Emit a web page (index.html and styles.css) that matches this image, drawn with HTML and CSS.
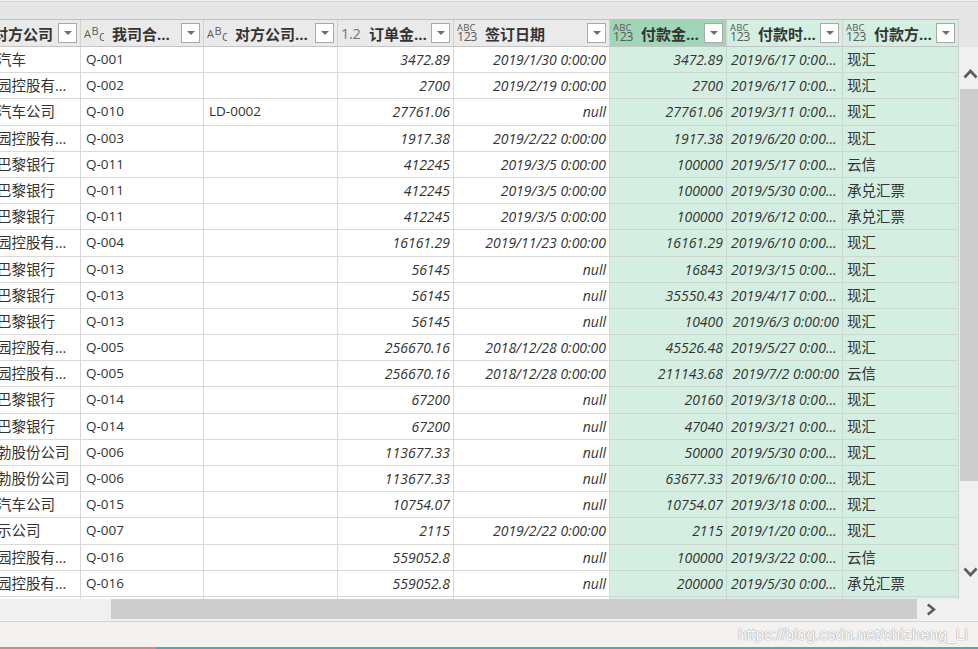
FILE: index.html
```html
<!DOCTYPE html>
<html lang="zh-CN">
<head>
<meta charset="utf-8">
<title>Power Query</title>
<link rel="stylesheet" href="styles.css">
</head>
<body>
<div class="top"></div>
<div class="mid">
  <div class="grid">
    <div class="hrow">
      <div class="hc first"><span class="ti abc"><i>A</i><i class="sup">B</i><i class="sub">C</i></span><span class="hl">对方公司</span><span class="dd"></span></div>
      <div class="hc"><span class="ti abc"><i>A</i><i class="sup">B</i><i class="sub">C</i></span><span class="hl">我司合同号</span><span class="dd"></span></div>
      <div class="hc"><span class="ti abc"><i>A</i><i class="sup">B</i><i class="sub">C</i></span><span class="hl">对方公司合同号</span><span class="dd"></span></div>
      <div class="hc"><span class="ti num">1.2</span><span class="hl">订单金额</span><span class="dd"></span></div>
      <div class="hc"><span class="ti any"><b>ABC</b><b class="d">123</b></span><span class="hl">签订日期</span><span class="dd"></span></div>
      <div class="hc sel"><span class="ti any"><b>ABC</b><b class="d">123</b></span><span class="hl">付款金额</span><span class="dd"></span></div>
      <div class="hc gh"><span class="ti any"><b>ABC</b><b class="d">123</b></span><span class="hl">付款时间</span><span class="dd"></span></div>
      <div class="hc gh"><span class="ti any"><b>ABC</b><b class="d">123</b></span><span class="hl">付款方式</span><span class="dd"></span></div>
    </div>
    <div class="body">
      <div class="row"><div class="c c1">上海汽车</div><div class="c">Q-001</div><div class="c"></div><div class="c n">3472.89</div><div class="c n">2019/1/30 0:00:00</div><div class="c g n">3472.89</div><div class="c g n t">2019/6/17 0:00:00</div><div class="c g cj">现汇</div></div>
      <div class="row"><div class="c c1">科技园控股有限公司</div><div class="c">Q-002</div><div class="c"></div><div class="c n">2700</div><div class="c n">2019/2/19 0:00:00</div><div class="c g n">2700</div><div class="c g n t">2019/6/17 0:00:00</div><div class="c g cj">现汇</div></div>
      <div class="row"><div class="c c1">北京汽车公司</div><div class="c">Q-010</div><div class="c">LD-0002</div><div class="c n">27761.06</div><div class="c n">null</div><div class="c g n">27761.06</div><div class="c g n t">2019/3/11 0:00:00</div><div class="c g cj">现汇</div></div>
      <div class="row"><div class="c c1">科技园控股有限公司</div><div class="c">Q-003</div><div class="c"></div><div class="c n">1917.38</div><div class="c n">2019/2/22 0:00:00</div><div class="c g n">1917.38</div><div class="c g n t">2019/6/20 0:00:00</div><div class="c g cj">现汇</div></div>
      <div class="row"><div class="c c1">法国巴黎银行</div><div class="c">Q-011</div><div class="c"></div><div class="c n">412245</div><div class="c n">2019/3/5 0:00:00</div><div class="c g n">100000</div><div class="c g n t">2019/5/17 0:00:00</div><div class="c g cj">云信</div></div>
      <div class="row"><div class="c c1">法国巴黎银行</div><div class="c">Q-011</div><div class="c"></div><div class="c n">412245</div><div class="c n">2019/3/5 0:00:00</div><div class="c g n">100000</div><div class="c g n t">2019/5/30 0:00:00</div><div class="c g cj">承兑汇票</div></div>
      <div class="row"><div class="c c1">法国巴黎银行</div><div class="c">Q-011</div><div class="c"></div><div class="c n">412245</div><div class="c n">2019/3/5 0:00:00</div><div class="c g n">100000</div><div class="c g n t">2019/6/12 0:00:00</div><div class="c g cj">承兑汇票</div></div>
      <div class="row"><div class="c c1">科技园控股有限公司</div><div class="c">Q-004</div><div class="c"></div><div class="c n">16161.29</div><div class="c n">2019/11/23 0:00:00</div><div class="c g n">16161.29</div><div class="c g n t">2019/6/10 0:00:00</div><div class="c g cj">现汇</div></div>
      <div class="row"><div class="c c1">法国巴黎银行</div><div class="c">Q-013</div><div class="c"></div><div class="c n">56145</div><div class="c n">null</div><div class="c g n">16843</div><div class="c g n t">2019/3/15 0:00:00</div><div class="c g cj">现汇</div></div>
      <div class="row"><div class="c c1">法国巴黎银行</div><div class="c">Q-013</div><div class="c"></div><div class="c n">56145</div><div class="c n">null</div><div class="c g n">35550.43</div><div class="c g n t">2019/4/17 0:00:00</div><div class="c g cj">现汇</div></div>
      <div class="row"><div class="c c1">法国巴黎银行</div><div class="c">Q-013</div><div class="c"></div><div class="c n">56145</div><div class="c n">null</div><div class="c g n">10400</div><div class="c g n t">2019/6/3 0:00:00</div><div class="c g cj">现汇</div></div>
      <div class="row"><div class="c c1">科技园控股有限公司</div><div class="c">Q-005</div><div class="c"></div><div class="c n">256670.16</div><div class="c n">2018/12/28 0:00:00</div><div class="c g n">45526.48</div><div class="c g n t">2019/5/27 0:00:00</div><div class="c g cj">现汇</div></div>
      <div class="row"><div class="c c1">科技园控股有限公司</div><div class="c">Q-005</div><div class="c"></div><div class="c n">256670.16</div><div class="c n">2018/12/28 0:00:00</div><div class="c g n">211143.68</div><div class="c g n t">2019/7/2 0:00:00</div><div class="c g cj">云信</div></div>
      <div class="row"><div class="c c1">法国巴黎银行</div><div class="c">Q-014</div><div class="c"></div><div class="c n">67200</div><div class="c n">null</div><div class="c g n">20160</div><div class="c g n t">2019/3/18 0:00:00</div><div class="c g cj">现汇</div></div>
      <div class="row"><div class="c c1">法国巴黎银行</div><div class="c">Q-014</div><div class="c"></div><div class="c n">67200</div><div class="c n">null</div><div class="c g n">47040</div><div class="c g n t">2019/3/21 0:00:00</div><div class="c g cj">现汇</div></div>
      <div class="row"><div class="c c1">中蓬勃股份公司</div><div class="c">Q-006</div><div class="c"></div><div class="c n">113677.33</div><div class="c n">null</div><div class="c g n">50000</div><div class="c g n t">2019/5/30 0:00:00</div><div class="c g cj">现汇</div></div>
      <div class="row"><div class="c c1">中蓬勃股份公司</div><div class="c">Q-006</div><div class="c"></div><div class="c n">113677.33</div><div class="c n">null</div><div class="c g n">63677.33</div><div class="c g n t">2019/6/10 0:00:00</div><div class="c g cj">现汇</div></div>
      <div class="row"><div class="c c1">北京汽车公司</div><div class="c">Q-015</div><div class="c"></div><div class="c n">10754.07</div><div class="c n">null</div><div class="c g n">10754.07</div><div class="c g n t">2019/3/18 0:00:00</div><div class="c g cj">现汇</div></div>
      <div class="row"><div class="c c1">快乐示公司</div><div class="c">Q-007</div><div class="c"></div><div class="c n">2115</div><div class="c n">2019/2/22 0:00:00</div><div class="c g n">2115</div><div class="c g n t">2019/1/20 0:00:00</div><div class="c g cj">现汇</div></div>
      <div class="row"><div class="c c1">科技园控股有限公司</div><div class="c">Q-016</div><div class="c"></div><div class="c n">559052.8</div><div class="c n">null</div><div class="c g n">100000</div><div class="c g n t">2019/3/22 0:00:00</div><div class="c g cj">云信</div></div>
      <div class="row"><div class="c c1">科技园控股有限公司</div><div class="c">Q-016</div><div class="c"></div><div class="c n">559052.8</div><div class="c n">null</div><div class="c g n">200000</div><div class="c g n t">2019/5/30 0:00:00</div><div class="c g cj">承兑汇票</div></div>
      <div class="row"><div class="c c1">科技园控股有限公司</div><div class="c">Q-017</div><div class="c"></div><div class="c n">38000</div><div class="c n">null</div><div class="c g n">38000</div><div class="c g n t">2019/6/5 0:00:00</div><div class="c g cj">现汇</div></div>
    </div>
  </div>
  <div class="side">
    <div class="side-head"></div>
    <div class="vs">
      <div class="vs-up"><svg width="15" height="10" viewBox="0 0 15 10"><polyline points="1.5,8.5 7.5,2 13.5,8.5" fill="none" stroke="#5c5c5c" stroke-width="2.6"/></svg></div>
      <div class="vs-thumb"></div>
      <div class="vs-space"></div>
      <div class="vs-down"><svg width="15" height="10" viewBox="0 0 15 10"><polyline points="1.5,1.5 7.5,8 13.5,1.5" fill="none" stroke="#5c5c5c" stroke-width="2.6"/></svg></div>
    </div>
  </div>
</div>
<div class="hs">
  <div class="hs-thumb"></div>
  <div class="hs-right"><svg width="10" height="13" viewBox="0 0 10 13"><polyline points="1.8,1.5 8,6.5 1.8,11.5" fill="none" stroke="#5c5c5c" stroke-width="2.6"/></svg></div>
</div>
<div class="status"><span class="wm">https://blog.csdn.net/shizheng_Li</span></div>
<div class="strip"></div>
</body>
</html>
```
FILE: styles.css
```css
* { box-sizing: border-box; }
html, body { margin: 0; padding: 0; }
body {
  width: 978px;
  height: 649px;
  overflow: hidden;
  background: #f0f0f0;
  font-family: "Open Sans", "Noto Sans CJK SC", sans-serif;
  font-size: 13.5px;
  color: #333;
}
.top {
  height: 18px;
  margin-top: 1px;
  border-top: 1px solid #d6d6d6;
  background: #e6e6e6;
}
.mid { display: flex; height: 580px; }
.grid { width: 959px; overflow: hidden; flex: none; }
.side { width: 19px; flex: none; display: flex; flex-direction: column; }
.side-head { height: 28px; background: #e6e6e6; }
.vs { flex: 1; background: #f0f0f0; display: flex; flex-direction: column; }
.vs-up { height: 42px; display: flex; justify-content: center; align-items: flex-end; padding: 0 0 10px 3px; }
.vs-thumb { height: 392px; margin-left: 1px; background: #cdcdcd; }
.vs-space { flex: 1; }
.vs-down { height: 42px; display: flex; justify-content: center; align-items: flex-start; padding: 10px 0 0 3px; }

.hrow, .row {
  display: grid;
  grid-template-columns: 117px 123px 134px 116px 156px 117px 116px 116px;
  margin-left: -36px;
}
.hrow {
  height: 28px;
  border-top: 1px solid #c0c0c0;
  border-bottom: 1px solid #c4c4c4;
  background: #eaeaea;
}
.hc {
  display: flex;
  align-items: center;
  min-width: 0;
  padding-left: 3px;
  border-right: 1px solid #d2d2d2;
}
.hc.sel { background: #9fd6b7; }
.hc.gh { background: #d4efe1; }
.ti { width: 20px; flex: none; margin-right: 8px; color: #5a5a5a; overflow: hidden; }
.ti i { font-style: normal; }
.abc { font-size: 11px; display: flex; align-items: center; height: 20px; }
.abc .sup { position: relative; top: -3px; margin-left: 0.5px; }
.abc .sub { position: relative; top: 3px; margin-left: 0.5px; }
.num { font-size: 14.5px; color: #767676; letter-spacing: -0.3px; }
.any { display: flex; flex-direction: column; align-items: flex-start; line-height: 1; }
.any b { font-weight: 400; font-size: 9.5px; letter-spacing: 0.2px; }
.any b.d { font-size: 12.5px; letter-spacing: -0.5px; margin-top: -1px; }
.hl {
  flex: 1;
  min-width: 0;
  overflow: hidden;
  white-space: nowrap;
  text-overflow: ellipsis;
  font-weight: 700;
  font-size: 15px;
  color: #333;
}
.first .hl { margin-left: -2px; }
.first .dd { margin-left: 1px; }
.dd {
  width: 19px;
  height: 20px;
  flex: none;
  margin: 0 3px 0 4px;
  border: 1px solid #a9a9a9;
  background: #fff;
  display: flex;
  align-items: center;
  justify-content: center;
}
.dd::after {
  content: "";
  border-left: 4px solid transparent;
  border-right: 4px solid transparent;
  border-top: 4px solid #6e6e6e;
}

.body { height: 552px; overflow: hidden; background: #fff; }
.row { height: 26.2px; }
.c {
  min-width: 0;
  padding: 0 4px 0 5px;
  line-height: 25px;
  white-space: nowrap;
  overflow: hidden;
  text-overflow: ellipsis;
  background: #fff;
  border-right: 1px solid #d9d9d9;
  border-bottom: 1px solid #d9d9d9;
}
.c1 { padding-left: 4px; font-size: 14.5px; }
.cj { font-size: 14.5px; padding-left: 4px; }
.n { text-align: right; font-style: italic; font-size: 14px; padding: 0 3px 0 3px; }
.n.t { padding-left: 4px; letter-spacing: 0.06px; }
.g { background: #d4efe1; border-color: #cdd6d1; }

.hs { height: 22px; display: flex; background: #f0f0f0; }
.hs-thumb { margin-left: 111px; width: 806px; height: 20px; background: #cdcdcd; }
.hs-right { margin-left: 9px; padding-top: 3px; }
.status {
  height: 26px;
  border-top: 1px solid #d3d3d3;
  background: #f3f2f1;
  display: flex;
  justify-content: flex-end;
  align-items: center;
  padding-right: 10px;
}
.wm {
  font-family: "Liberation Sans", sans-serif;
  font-size: 15.8px;
  color: #ffffff;
  text-shadow: 0 0 1px #8c8c8c, 0 0 1px #a0a0a0;
}
.strip {
  height: 2px;
  background: linear-gradient(to right, #c48e8e 0, #c48e8e 156px, #5fa2ad 156px, #5fa2ad 100%);
}
```
